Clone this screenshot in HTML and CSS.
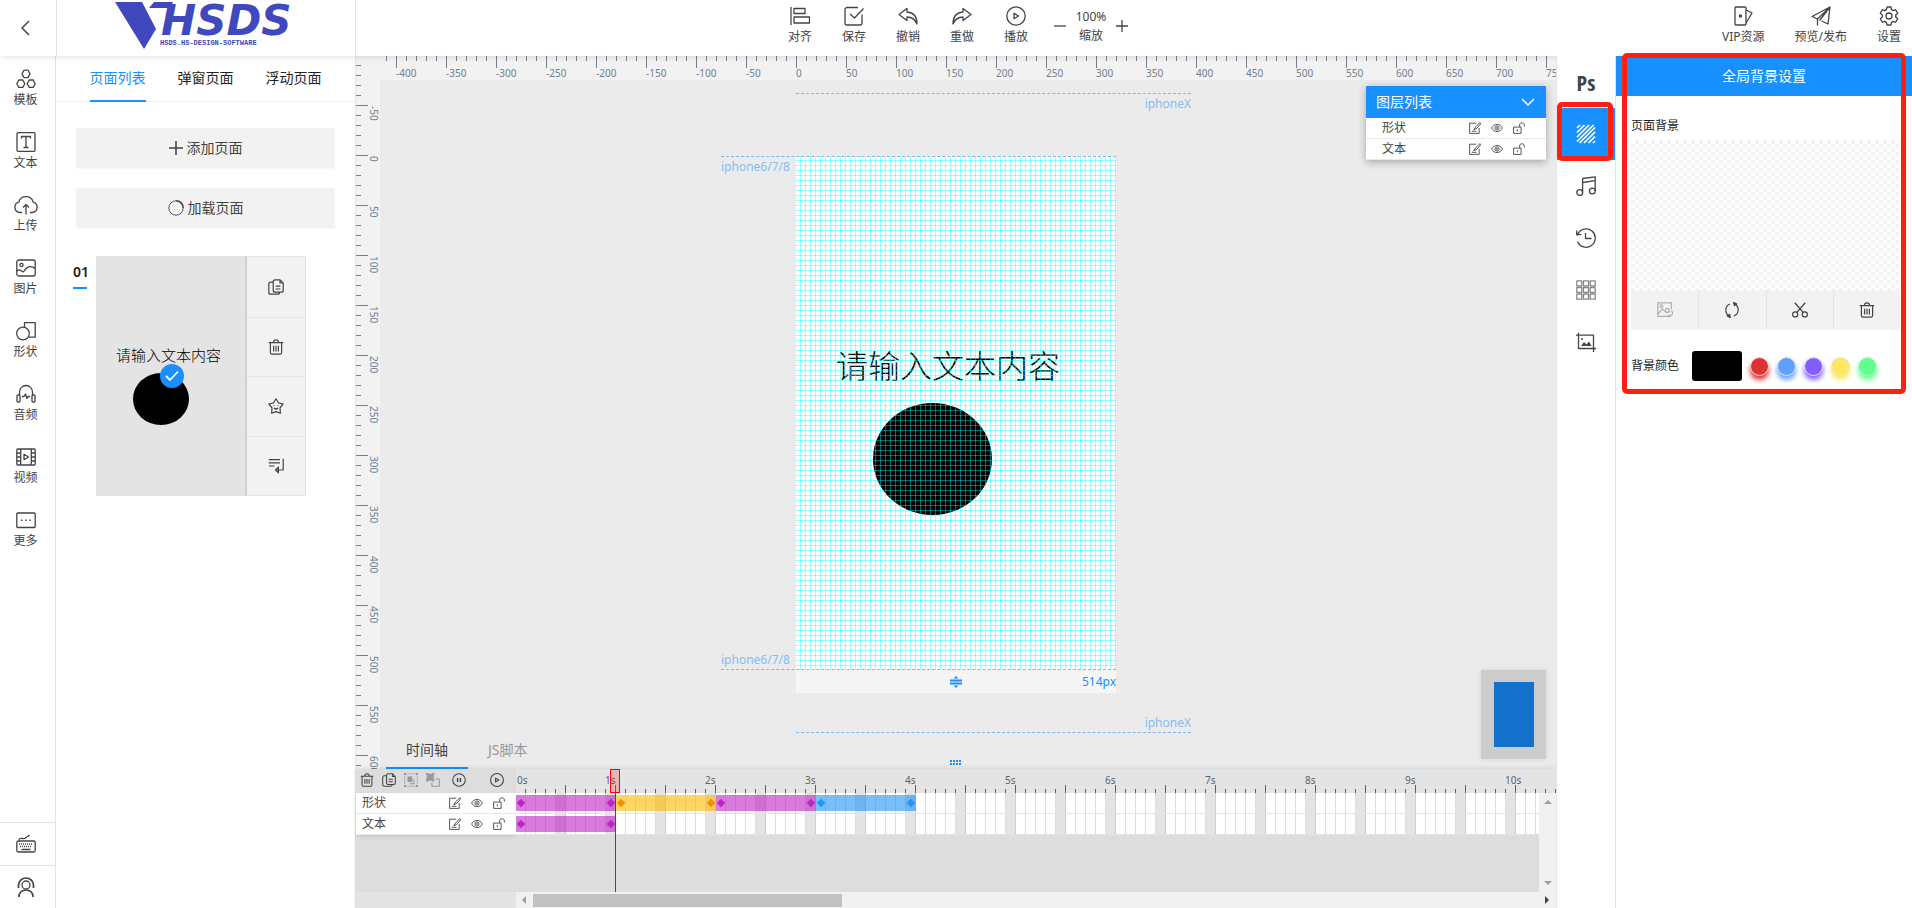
FILE: index.html
```html
<!DOCTYPE html>
<html lang="zh-CN">
<head>
<meta charset="utf-8">
<title>HSDS</title>
<meta name="viewport" content="width=device-width, initial-scale=1">
<link rel="stylesheet" href="styles.css">
</head>
<body>
<svg class="sprite" aria-hidden="true">
  <symbol id="i-back" viewBox="0 0 20 20"><path d="M13 3 6 10l7 7"/></symbol>
  <symbol id="i-tpl" viewBox="0 0 20 20"><path d="M8 1.200h4l2 3.700-2 3.700H8L6 4.900zM2.800 11h4l2 3.700-2 3.700h-4l-2-3.700zM13.200 11h4l2 3.700-2 3.700h-4l-2-3.700z"/></symbol>
  <symbol id="i-text" viewBox="0 0 20 20"><rect x="1" y=".7" width="18" height="18.600" rx="1"/><path d="M5.500 6.500v-2h9v2M10 4.500v11M7.500 15.500h5"/></symbol>
  <symbol id="i-upload" viewBox="0 0 24 20"><path d="M8 17.500H6a5.300 5.300 0 0 1-1.200-10.400 7.500 7.500 0 0 1 14.400 0A5.300 5.300 0 0 1 18 17.500h-2M12 19.500V9.500M9 12.500l3-3 3 3"/></symbol>
  <symbol id="i-image" viewBox="0 0 20 20"><rect x=".8" y="2" width="18.400" height="16" rx="2"/><circle cx="5.500" cy="7" r="1.600"/><path d="M1 13c1.500-1.500 3-1.500 4.500 0s2 1 3-.5c3-4 6.500-5.500 10.500-2"/></symbol>
  <symbol id="i-shape" viewBox="0 0 20 20"><circle cx="7" cy="12.500" r="6.300"/><path d="M8.500 6V1.700h10.700v14.500h-6.500"/></symbol>
  <symbol id="i-audio" viewBox="0 0 20 20"><path d="M3.500 11V8a6.500 6.500 0 0 1 13 0v3"/><rect x="1" y="11" width="3" height="7" rx="1"/><rect x="16" y="11" width="3" height="7" rx="1"/><path d="M6 12.500h2l1.500-2.500 1.500 4.500 1-2h2"/></symbol>
  <symbol id="i-video" viewBox="0 0 20 20"><rect x=".8" y="2" width="18.400" height="16" rx="1"/><path d="M4.700 2v16M15.300 2v16M1 6h3.700M1 10h3.700M1 14h3.700M15.300 6H19M15.300 10H19M15.300 14H19M8 7.300v5.400l4.500-2.700z"/></symbol>
  <symbol id="i-more" viewBox="0 0 20 20"><rect x=".8" y="3" width="18.400" height="14.500" rx="1"/><path d="M5 10.200h1.500M9.300 10.200h1.500M13.500 10.200H15" stroke-width="1.600"/></symbol>
  <symbol id="i-keys" viewBox="0 0 20 20"><rect x=".8" y="7" width="18.400" height="11" rx="1.500"/><path d="M3 7c0-5 5-1 6.500-3S12 3 13.500 1M3 10h1m1 0h1m1 0h1m1 0h1m1 0h1m1 0h1m1 0h1M4 12.500h1m1 0h1m1 0h1m1 0h1m1 0h1m1 0h1M5.500 15.500h9"/></symbol>
  <symbol id="i-agent" viewBox="0 0 20 20"><circle cx="10" cy="8" r="4"/><path d="M2.500 11V8.500a7.500 7.500 0 0 1 15 0V11M2.800 20c.5-5 3.200-7 7.200-7s6.700 2 7.200 7M2.500 7.500v3.500M17.500 7.500v3.500" stroke-width="1.700"/></symbol>
  <symbol id="i-align" viewBox="0 0 20 20"><path d="M1 1v18"/><rect x="4" y="2.500" width="11" height="5"/><rect x="4" y="11" width="15.500" height="6"/></symbol>
  <symbol id="i-save" viewBox="0 0 20 20"><path d="M14 1.500H3a2 2 0 0 0-2 2V17a2 2 0 0 0 2 2h13a2 2 0 0 0 2-2V8.500M6 8l4.500 4L19.500 2.500"/></symbol>
  <symbol id="i-undo" viewBox="0 0 20 20"><path d="M9 2.500 1 8.500l8 6V11c5 0 8 2 10 7 0-7-3.500-11.500-10-12z"/></symbol>
  <symbol id="i-redo" viewBox="0 0 20 20"><path d="m11 2.500 8 6-8 6V11c-5 0-8 2-10 7 0-7 3.500-11.500 10-12z"/></symbol>
  <symbol id="i-play" viewBox="0 0 20 20"><circle cx="10" cy="10" r="9.200"/><path d="M8 7.300v5.400l4.600-2.700z"/></symbol>
  <symbol id="i-pause" viewBox="0 0 20 20"><circle cx="10" cy="10" r="9"/><path d="M8 7v6M12 7v6" stroke-width="2"/></symbol>
  <symbol id="i-minus" viewBox="0 0 12 12"><path d="M0 6h12"/></symbol>
  <symbol id="i-plus" viewBox="0 0 12 12"><path d="M0 6h12M6 0v12"/></symbol>
  <symbol id="i-vip" viewBox="0 0 20 20"><rect x="2" y="1" width="11" height="18" rx="1"/><path d="m13 4 6 3-6 10"/><circle cx="7.500" cy="10" r="1" fill="currentColor"/></symbol>
  <symbol id="i-send" viewBox="0 0 20 20"><path d="M19 1 1 10.500l5.500 2.500L19 1l-2 17-6.500-3M6.500 13v6.500M8.500 14.500 19 1"/></symbol>
  <symbol id="i-gear" viewBox="0 0 20 20"><path d="m8 1-.5 2.600-1.700 1-2.500-.9-2 3.500 2 1.700v2.200l-2 1.700 2 3.500 2.500-.9 1.700 1L8 19h4l.5-2.600 1.700-1 2.500.9 2-3.500-2-1.700V8.900l2-1.700-2-3.500-2.500.9-1.700-1L12 1z"/><circle cx="10" cy="10" r="3"/></symbol>
  <symbol id="i-load" viewBox="0 0 20 20"><path d="M10 1a9 9 0 1 0 9 9" stroke-width="1.100"/><path d="M10 1a9 9 0 0 1 9 9" stroke-width="2"/></symbol>
  <symbol id="i-copy" viewBox="0 0 20 20"><path d="M6.500 3.500c0-1.500.8-2.500 2.500-2.500h6l4 4v9c0 1.700-.8 2.500-2.500 2.500H9c-1.700 0-2.500-.8-2.500-2.500zM15 1v4h4M6.500 4H3.500C1.800 4 1 5 1 6.500v10C1 18.200 2 19 3.500 19H12c1.500 0 2.500-.8 2.500-2.500M9.500 9h6M9.500 12.500h6"/></symbol>
  <symbol id="i-trash" viewBox="0 0 20 20"><path d="M1 4.500h18M6.500 4.500C7 2 8 1 10 1s3 1 3.500 3.500M3 4.500V17c0 1.200.8 2 2 2h10c1.200 0 2-.8 2-2V4.500M7 8.500v7M10 8.500v7M13 8.500v7"/></symbol>
  <symbol id="i-star" viewBox="0 0 20 20"><path d="m10 1 3 5 6 1.500-4 4.700.5 6.800-5.500-2-5.500 2 .5-6.800-4-4.700L7 6z"/><path d="M7 9.500h1M12 9.500h1M7.500 12.500c1.500 1.500 3.500 1.500 5 0"/></symbol>
  <symbol id="i-wrap" viewBox="0 0 20 20"><path d="M1 2h14M1 6h14M1 10h7M19 1v14h-8M13 11.500 9.500 15l3.500 3.500z"/></symbol>
  <symbol id="i-edit" viewBox="0 0 20 20"><path d="M12 2H1v17h16v-9M18.500 1 11 8l-3 5 5-2.500L19.500 3zM4.500 15.500h8"/></symbol>
  <symbol id="i-eye" viewBox="0 0 20 20"><path d="M1 10c4-8 14-8 18 0-4 8-14 8-18 0z"/><circle cx="10" cy="10" r="3.500"/><circle cx="10" cy="10" r=".8"/></symbol>
  <symbol id="i-lock" viewBox="0 0 20 20"><rect x="1" y="8.500" width="12.500" height="10.500"/><path d="M11 8V5c0-5 8-5 8 0v2.500M7.200 12v3.500"/></symbol>
  <symbol id="i-group" viewBox="0 0 20 20"><path d="M1 3.500v13M19 3.500v13M3.500 1h13M3.500 19h13" opacity=".6"/><path d="M0 0h3v3H0zM17 0h3v3h-3zM0 17h3v3H0zM17 17h3v3h-3zM5 5h7v8H5zM13.500 9v5.500H8V16h7V9z" fill="currentColor" stroke="none"/></symbol>
  <symbol id="i-ungroup" viewBox="0 0 20 20"><path d="M0 0h3v1h6V0h3v3h-1v6h1v3H9v-1H3v1H0V9h1V3H0z" fill="currentColor" stroke="none"/><path d="M13.500 8.500H19V19H8.500v-5.500"/></symbol>
  <symbol id="i-chev" viewBox="0 0 14 14"><path d="m1 4 6 6 6-6" stroke-width="1.500"/></symbol>
  <symbol id="i-check" viewBox="0 0 14 14"><path d="m1 7 4 4 8-8.500" stroke-width="1.800"/></symbol>
  <symbol id="i-hatch" viewBox="0 0 20 20"><g stroke-width="1.700"><path d="M1 4 4 1M1 8.500 8.500 1M1 13 13 1M1 17.500 17.500 1M3.500 19 19 3.500M8 19 19 8M12.500 19l6.500-6.500M17 19l2-2"/></g></symbol>
  <symbol id="i-music" viewBox="0 0 20 20"><circle cx="3.700" cy="16.500" r="2.900"/><circle cx="16.300" cy="15" r="2.900"/><path d="M6.600 16.500v-14L19.200.8V15M6.600 6.500 19.200 4.700"/></symbol>
  <symbol id="i-history" viewBox="0 0 20 20"><path d="M1.800 6a9.200 9.200 0 1 1-.3 7.500M.7 2.500v4.300l4.500-.5M9.500 5v5.500h6"/></symbol>
  <symbol id="i-grid" viewBox="0 0 20 20"><path d="M.8.800h5v5h-5zM7.500.800h5v5h-5zM14.200.800h5v5h-5zM.8 7.500h5v5h-5zM7.500 7.500h5v5h-5zM14.200 7.500h5v5h-5zM.8 14.200h5v5h-5zM7.500 14.200h5v5h-5zM14.200 14.200h5v5h-5z"/></symbol>
  <symbol id="i-crop" viewBox="0 0 20 20"><path d="M0 3.200h17.500V20M2.500.5v16H20"/><path d="m5 14 3-4 2.500 2.500 2.500-3 2.500 4.500z" fill="currentColor" stroke="none"/><circle cx="6" cy="7" r="1" fill="currentColor" stroke="none"/></symbol>
  <symbol id="i-swap" viewBox="0 0 20 20"><path d="M17 18H1V1h17v8M1 15l6-6 4 4"/><circle cx="5.500" cy="5.500" r="1.800"/><circle cx="13" cy="10.500" r="2.500"/><path d="M18 11c3 3 1 7-4 7.500M16 15.500l-3 3"/></symbol>
  <symbol id="i-cycle" viewBox="0 0 20 20"><path d="M7.500 2.500C1 5 .5 14 6.500 17.500M12.500 17.500C19 15 19.500 6 13.500 2.500"/><path d="m12 .5 1 4 3-2zM8 19.500l-1-4-3 2z" fill="currentColor"/></symbol>
  <symbol id="i-cut" viewBox="0 0 20 20"><circle cx="4" cy="15.500" r="3.200"/><circle cx="16" cy="15.500" r="3.200"/><path d="M3.500 1 14 13M16.500 1 6 13" stroke-width="1.700"/></symbol>
  <symbol id="i-resize" viewBox="0 0 12 12"><path d="M0 4.500h12M0 7.500h12" stroke-width="2"/><path d="m6 0 2.500 2.500h-5zM6 12l2.500-2.500h-5z" fill="currentColor" stroke="none"/></symbol>
  <symbol id="i-up" viewBox="0 0 8 8"><path d="M0 6h8L4 2z" fill="currentColor" stroke="none"/></symbol>
</svg>

<header class="topbar">
  <button class="back" aria-label="返回"><svg class="ic"><use href="#i-back"/></svg></button>
  <a class="logo" href="#" aria-label="HSDS">
    <svg width="182" height="52" viewBox="0 0 182 52" aria-hidden="true">
      <path class="logo-mark" d="M0 2h27l14 27-12 20zM39 2h19l-3 6H34z"/>
      <text class="logo-name" x="46" y="35">HSDS</text>
      <text class="logo-sub" x="45" y="45">HSDS.HS-DESIGN-SOFTWARE</text>
    </svg>
  </a>
  <nav class="tools">
    <button class="tool"><svg class="ic"><use href="#i-align"/></svg>对齐</button>
    <button class="tool"><svg class="ic"><use href="#i-save"/></svg>保存</button>
    <button class="tool"><svg class="ic"><use href="#i-undo"/></svg>撤销</button>
    <button class="tool"><svg class="ic"><use href="#i-redo"/></svg>重做</button>
    <button class="tool"><svg class="ic"><use href="#i-play"/></svg>播放</button>
    <div class="zoom">
      <button aria-label="缩小"><svg class="ic ic-12"><use href="#i-minus"/></svg></button>
      <div class="zoom-value"><span>100%</span><span>缩放</span></div>
      <button aria-label="放大"><svg class="ic ic-12"><use href="#i-plus"/></svg></button>
    </div>
  </nav>
  <nav class="tools-right">
    <button class="tool-auto"><svg class="ic"><use href="#i-vip"/></svg>VIP资源</button>
    <button class="tool-auto"><svg class="ic"><use href="#i-send"/></svg>预览/发布</button>
    <button class="tool-auto"><svg class="ic"><use href="#i-gear"/></svg>设置</button>
  </nav>
</header>

<main class="app">
  <nav class="side">
    <button class="side-item"><svg class="ic"><use href="#i-tpl"/></svg>模板</button>
    <button class="side-item"><svg class="ic"><use href="#i-text"/></svg>文本</button>
    <button class="side-item"><svg class="ic ic-wide"><use href="#i-upload"/></svg>上传</button>
    <button class="side-item"><svg class="ic"><use href="#i-image"/></svg>图片</button>
    <button class="side-item"><svg class="ic"><use href="#i-shape"/></svg>形状</button>
    <button class="side-item"><svg class="ic"><use href="#i-audio"/></svg>音频</button>
    <button class="side-item"><svg class="ic"><use href="#i-video"/></svg>视频</button>
    <button class="side-item"><svg class="ic"><use href="#i-more"/></svg>更多</button>
    <div class="side-foot">
      <button aria-label="快捷键"><svg class="ic"><use href="#i-keys"/></svg></button>
      <button aria-label="客服"><svg class="ic"><use href="#i-agent"/></svg></button>
    </div>
  </nav>

  <section class="pages">
    <div class="page-tabs" role="tablist">
      <button role="tab" aria-selected="true" class="on">页面列表</button>
      <button role="tab">弹窗页面</button>
      <button role="tab">浮动页面</button>
    </div>
    <div class="page-body">
      <button class="wide-btn"><svg class="ic ic-14"><use href="#i-plus"/></svg>添加页面</button>
      <button class="wide-btn"><svg class="ic ic-16"><use href="#i-load"/></svg>加载页面</button>
    </div>
    <article class="page-card">
      <span class="page-no">01</span>
      <div class="thumb">
        <span class="thumb-text">请输入文本内容</span>
        <span class="thumb-disc"></span>
        <span class="thumb-check"><svg class="ic ic-14"><use href="#i-check"/></svg></span>
      </div>
      <div class="page-acts">
        <button aria-label="复制"><svg class="ic ic-16"><use href="#i-copy"/></svg></button>
        <button aria-label="删除"><svg class="ic ic-16"><use href="#i-trash"/></svg></button>
        <button aria-label="收藏"><svg class="ic ic-16"><use href="#i-star"/></svg></button>
        <button aria-label="移动"><svg class="ic ic-16"><use href="#i-wrap"/></svg></button>
      </div>
    </article>
  </section>

  <section class="work">
    <div class="canvas">
      <div class="rule-x"><div class="rule-x-labels">
        <span>-400</span><span>-350</span><span>-300</span><span>-250</span><span>-200</span><span>-150</span><span>-100</span><span>-50</span><span>0</span><span>50</span><span>100</span><span>150</span><span>200</span><span>250</span><span>300</span><span>350</span><span>400</span><span>450</span><span>500</span><span>550</span><span>600</span><span>650</span><span>700</span><span>750</span>
      </div></div>
      <div class="rule-y"><div class="rule-y-labels">
        <span>-50</span><span>0</span><span>50</span><span>100</span><span>150</span><span>200</span><span>250</span><span>300</span><span>350</span><span>400</span><span>450</span><span>500</span><span>550</span><span>600</span>
      </div></div>
      <div class="board">
        <span class="board-text">请输入文本内容</span>
        <span class="board-disc"></span>
        <div class="board-grid"></div>
        <span class="guide guide-8 guide-8-top">iphone6/7/8</span>
        <span class="guide guide-8 guide-8-bottom">iphone6/7/8</span>
        <span class="guide guide-x guide-x-top">iphoneX</span>
        <span class="guide guide-x guide-x-bottom">iphoneX</span>
        <div class="board-foot"><svg class="ic ic-12"><use href="#i-resize"/></svg><span>514px</span></div>
      </div>
      <aside class="layers">
        <button class="layers-head">图层列表<svg class="ic ic-14"><use href="#i-chev"/></svg></button>
        <div class="layer-row"><span>形状</span><button aria-label="编辑"><svg class="ic"><use href="#i-edit"/></svg></button><button aria-label="显示"><svg class="ic"><use href="#i-eye"/></svg></button><button aria-label="锁定"><svg class="ic"><use href="#i-lock"/></svg></button></div>
        <div class="layer-row"><span>文本</span><button aria-label="编辑"><svg class="ic"><use href="#i-edit"/></svg></button><button aria-label="显示"><svg class="ic"><use href="#i-eye"/></svg></button><button aria-label="锁定"><svg class="ic"><use href="#i-lock"/></svg></button></div>
      </aside>
      <div class="minimap"><div class="minimap-page"></div></div>
      <div class="work-tabs" role="tablist">
        <button role="tab" aria-selected="true" class="on">时间轴</button>
        <button role="tab">JS脚本</button>
      </div>
      <div class="grip"></div>
    </div>

    <div class="timeline">
      <div class="tl-head">
        <div class="tl-tools">
          <button aria-label="删除"><svg class="ic ic-14"><use href="#i-trash"/></svg></button>
          <button aria-label="复制"><svg class="ic ic-14"><use href="#i-copy"/></svg></button>
          <button aria-label="组合" class="dim"><svg class="ic ic-14"><use href="#i-group"/></svg></button>
          <button aria-label="取消组合" class="dim"><svg class="ic ic-14"><use href="#i-ungroup"/></svg></button>
          <button aria-label="暂停" class="gap-l"><svg class="ic ic-14"><use href="#i-pause"/></svg></button>
          <button aria-label="播放" class="push"><svg class="ic ic-14"><use href="#i-play"/></svg></button>
        </div>
        <div class="tl-rule"><span>0s</span><span>1s</span><span>2s</span><span>3s</span><span>4s</span><span>5s</span><span>6s</span><span>7s</span><span>8s</span><span>9s</span><span>10s</span></div>
      </div>
      <div class="tl-body">
        <div class="tl-names">
          <div class="layer-row"><span>形状</span><button aria-label="编辑"><svg class="ic"><use href="#i-edit"/></svg></button><button aria-label="显示"><svg class="ic"><use href="#i-eye"/></svg></button><button aria-label="锁定"><svg class="ic"><use href="#i-lock"/></svg></button></div>
          <div class="layer-row"><span>文本</span><button aria-label="编辑"><svg class="ic"><use href="#i-edit"/></svg></button><button aria-label="显示"><svg class="ic"><use href="#i-eye"/></svg></button><button aria-label="锁定"><svg class="ic"><use href="#i-lock"/></svg></button></div>
        </div>
        <div class="tl-tracks">
          <div class="track"><div class="clip pink"><i></i><i></i></div><div class="clip gold"><i></i><i></i></div><div class="clip pink"><i></i><i></i></div><div class="clip sky"><i></i><i></i></div></div>
          <div class="track"><div class="clip pink"><i></i><i></i></div></div>
        </div>
        <div class="bar-y"><svg class="ic"><use href="#i-up"/></svg><svg class="ic flip"><use href="#i-up"/></svg></div>
      </div>
      <div class="tl-foot">
        <div class="bar-x"><svg class="ic turn-l"><use href="#i-up"/></svg><div class="bar-thumb"></div><svg class="ic turn-r"><use href="#i-up"/></svg></div>
      </div>
      <div class="playhead"></div>
    </div>
  </section>

  <nav class="rail">
    <button class="ps">Ps</button>
    <button class="on marked" aria-label="背景"><svg class="ic"><use href="#i-hatch"/></svg></button>
    <button aria-label="音乐"><svg class="ic"><use href="#i-music"/></svg></button>
    <button aria-label="历史"><svg class="ic"><use href="#i-history"/></svg></button>
    <button aria-label="网格"><svg class="ic soft"><use href="#i-grid"/></svg></button>
    <button aria-label="裁剪"><svg class="ic"><use href="#i-crop"/></svg></button>
  </nav>

  <aside class="props">
    <h2>全局背景设置</h2>
    <div class="props-body">
      <h3>页面背景</h3>
      <div class="checker"></div>
      <div class="bg-tools">
        <button disabled aria-label="更换"><svg class="ic ic-16"><use href="#i-swap"/></svg></button>
        <button aria-label="刷新"><svg class="ic ic-16"><use href="#i-cycle"/></svg></button>
        <button aria-label="裁剪"><svg class="ic ic-16"><use href="#i-cut"/></svg></button>
        <button aria-label="删除"><svg class="ic ic-16"><use href="#i-trash"/></svg></button>
      </div>
      <div class="colors">
        <label for="bg-color">背景颜色</label>
        <input type="color" id="bg-color" value="#000000">
        <button class="dot red" aria-label="红"></button>
        <button class="dot blue" aria-label="蓝"></button>
        <button class="dot violet" aria-label="紫"></button>
        <button class="dot yellow" aria-label="黄"></button>
        <button class="dot green" aria-label="绿"></button>
      </div>
    </div>
    <div class="frame"></div>
  </aside>
</main>
</body>
</html>
```
FILE: styles.css
```css
* { box-sizing: border-box; }

body {
  margin: 0;
  height: 100vh;
  display: flex;
  flex-direction: column;
  overflow: hidden;
  background: #fff;
  color: #444;
  font: 400 12px/16px "Noto Sans", "Noto Sans CJK SC", sans-serif;
}

button {
  margin: 0;
  padding: 0;
  border: 0;
  background: none;
  color: inherit;
  font: inherit;
  display: flex;
  align-items: center;
  justify-content: center;
}

h2, h3 { margin: 0; font-weight: 400; }

.sprite { position: absolute; width: 0; height: 0; }

.ic {
  width: 20px;
  height: 20px;
  flex: none;
  fill: none;
  stroke: currentColor;
  stroke-width: 1.300;
  stroke-linejoin: round;
}
.ic-wide { width: 24px; }
.ic-16 { width: 16px; height: 16px; stroke-width: 1.500; }
.ic-14 { width: 14px; height: 14px; stroke-width: 1.500; }
.ic-12 { width: 12px; height: 12px; }

/* top bar */
.topbar {
  position: relative;
  z-index: 3;
  flex: none;
  height: 56px;
  display: grid;
  grid-template-columns: 57px 299px 1fr 356px;
  background: #fff;
  box-shadow: 0 1px 6px rgba(0, 0, 0, .12);
}
.back { border-right: 1px solid #e4e4e4; padding-right: 4px; }
.back .ic { stroke-width: 1.500; }
.logo {
  display: flex;
  justify-content: center;
  border-right: 1px solid #e4e4e4;
}
.logo svg { overflow: visible; }
.logo-mark { fill: #3f48bd; }
.logo-name { fill: #3f48bd; font: italic bold 42px "DejaVu Sans", sans-serif; }
.logo-sub { fill: #3f48bd; font: bold 7px "Liberation Mono", monospace; }
.tools { display: flex; justify-content: center; }
.tool, .tool-auto {
  flex-direction: column;
  justify-content: flex-start;
  padding-top: 6px;
  gap: 3px;
}
.tool { width: 54px; }
.tools-right {
  display: flex;
  justify-content: flex-end;
  gap: 30px;
  padding-right: 11px;
}
.zoom { display: flex; padding: 0 11px; gap: 12px; height: 52px; }
.zoom-value {
  display: flex;
  flex-direction: column;
  justify-content: center;
  align-items: center;
  gap: 3px;
  width: 26px;
}
.zoom-value span { white-space: nowrap; }

/* page frame */
.app {
  flex: 1;
  min-height: 0;
  display: grid;
  grid-template-columns: 56px 300px 1fr 60px 296px;
}

.side {
  display: flex;
  flex-direction: column;
  border-right: 1px solid #e4e4e4;
}
.side-item {
  flex-direction: column;
  justify-content: flex-start;
  height: 63px;
  padding: 13px 4px 0 0;
  gap: 3px;
}
.side-foot { margin-top: auto; }
.side-foot button {
  width: 100%;
  height: 43px;
  padding-right: 4px;
  border-top: 1px solid #e4e4e4;
}

/* page list */
.pages { border-right: 1px solid #e4e4e4; }
.page-tabs {
  display: flex;
  justify-content: center;
  gap: 32px;
  height: 46px;
  border-bottom: 1px solid #eee;
  color: #222;
  font-size: 14px;
}
.page-tabs button { height: 46px; border-bottom: 2px solid transparent; }
.page-tabs .on { color: #1890ff; border-color: #1890ff; }
.page-body {
  display: flex;
  flex-direction: column;
  gap: 20px;
  padding: 26px 20px 28px;
}
.wide-btn {
  height: 40px;
  gap: 4px;
  background: #f2f2f2;
  border-radius: 2px;
  box-shadow: 0 1px 2px rgba(0, 0, 0, .04);
  font-size: 14px;
}
.wide-btn .ic { stroke-width: 1.300; }
.page-card { display: flex; height: 240px; padding-left: 17px; }
.page-no {
  align-self: flex-start;
  width: 14px;
  margin: 5px 9px 0 0;
  border-bottom: 2px solid #1890ff;
  color: #222;
  font-size: 14px;
  font-weight: 600;
  line-height: 22px;
  padding-bottom: 4px;
}
.thumb {
  position: relative;
  width: 151px;
  background: #e4e4e4;
  border-right: 2px solid #d0d0d0;
}
.thumb-text {
  position: absolute;
  left: 20px;
  top: 88px;
  color: #000;
  font-size: 15px;
  font-weight: 300;
  line-height: 22px;
  white-space: nowrap;
}
.thumb-disc {
  position: absolute;
  left: 37px;
  top: 117px;
  width: 56px;
  height: 52px;
  border-radius: 50%;
  background: #000;
}
.thumb-check {
  position: absolute;
  left: 64px;
  top: 108px;
  width: 24px;
  height: 24px;
  display: flex;
  align-items: center;
  justify-content: center;
  border-radius: 50%;
  background: #1890ff;
  color: #fff;
}
.page-acts {
  display: grid;
  grid-template-rows: repeat(4, 1fr);
  width: 59px;
  background: #f2f2f2;
  border: 1px solid #e4e4e4;
  border-left: 0;
}
.page-acts button + button { border-top: 1px solid #e4e4e4; }

/* workspace */
.work { display: flex; flex-direction: column; min-width: 0; }
.canvas {
  position: relative;
  flex: 1;
  overflow: hidden;
  background: #ebebeb;
  color: #1890ff;
}
.rule-x, .rule-y {
  position: absolute;
  left: 0;
  top: 0;
  overflow: hidden;
  background-color: #f2f2f2;
  color: #708090;
  font-size: 10px;
  line-height: 12px;
}
.rule-x {
  width: 100%;
  height: 24px;
  background-image:
    linear-gradient(90deg, #708090 1px, transparent 1px),
    linear-gradient(90deg, #708090 1px, transparent 1px);
  background-size: 50px 12px, 10px 5px;
  background-position: calc(50% - 135px) 0, calc(50% + 5px) 0;
  background-repeat: repeat-x;
}
.rule-x-labels { display: flex; margin-left: calc(50% - 560px); padding-top: 11px; }
.rule-x-labels span { flex: none; width: 50px; }
.rule-y {
  width: 24px;
  height: 100%;
  background-image:
    linear-gradient(#708090 1px, transparent 1px),
    linear-gradient(#708090 1px, transparent 1px);
  background-size: 12px 50px, 5px 10px;
  background-position: 0 49px, 0 9px;
  background-repeat: repeat-y;
}
.rule-y-labels { padding: 50px 0 0 12px; }
.rule-y-labels span { display: block; height: 50px; writing-mode: vertical-rl; width: 12px; }

.board {
  position: absolute;
  left: calc(50% - 160px);
  top: 100px;
  width: 320px;
  height: 514px;
  background: #fff;
}
.board-text {
  position: absolute;
  left: 40px;
  top: 186px;
  color: #000;
  font-size: 32px;
  font-weight: 300;
  line-height: 48px;
  white-space: nowrap;
}
.board-disc {
  position: absolute;
  left: 77px;
  top: 247px;
  width: 119px;
  height: 112px;
  border-radius: 50%;
  background: #000;
}
.board-grid {
  position: absolute;
  inset: 0;
  background:
    linear-gradient(90deg, transparent 4px, rgba(0, 255, 255, .4) 4px) 0 0 / 5px 5px,
    linear-gradient(transparent 4px, rgba(0, 255, 255, .4) 4px) 0 0 / 5px 5px;
}
.guide { position: absolute; color: #84bdf5; line-height: 20px; }
.guide-8 { left: -75px; width: 395px; }
.guide-x { left: 0; width: 395px; text-align: right; }
.guide-8-top { top: 0; border-top: 1px dashed #7ab8f5; }
.guide-8-bottom { bottom: 0; border-bottom: 1px dashed #7ab8f5; line-height: 18px; }
.guide-x-top { top: -63px; border-top: 1px dashed #7ab8f5; }
.guide-x-bottom { bottom: -63px; border-bottom: 1px dashed #7ab8f5; line-height: 18px; }
.board-foot {
  position: absolute;
  top: 100%;
  width: 100%;
  height: 23px;
  display: grid;
  grid-template-columns: 1fr auto 1fr;
  align-items: center;
  background: #f5f5f5;
}
.board-foot .ic { grid-column: 2; }
.board-foot span { text-align: right; }

.layers {
  position: absolute;
  right: 10px;
  top: 30px;
  width: 180px;
  background: #fff;
  color: #444;
  box-shadow: 0 2px 8px rgba(0, 0, 0, .3);
}
.layers-head {
  width: 100%;
  height: 32px;
  justify-content: space-between;
  padding: 0 11px 0 10px;
  background: #1890ff;
  color: #fff;
  font-size: 14px;
}
.layer-row {
  display: flex;
  align-items: center;
  height: 21px;
  padding-left: 6px;
  border-bottom: 1px solid #e8e8e8;
  background: #fff;
}
.layer-row span { flex: 1; line-height: 18px; }
.layer-row button { width: 22px; height: 20px; }
.layer-row .ic { width: 12px; height: 12px; stroke-width: 1.500; }
.layers .layer-row { padding: 0 16px; }

.minimap {
  position: absolute;
  right: 10px;
  bottom: 10px;
  width: 65px;
  height: 89px;
  padding: 12px 13px;
  background: #ccc;
  box-shadow: 0 0 6px rgba(0, 0, 0, .1);
}
.minimap-page { width: 40px; height: 65px; background: #1472cc; }

.work-tabs {
  position: absolute;
  left: 30px;
  bottom: 0;
  display: flex;
  font-size: 14px;
  color: #999;
}
.work-tabs button { height: 36px; padding: 0 20px; border-bottom: 2px solid transparent; }
.work-tabs .on { color: #444; border-color: #1890ff; }
.grip {
  position: absolute;
  left: calc(50% - 6px);
  bottom: 3px;
  width: 12px;
  height: 6px;
  background: linear-gradient(#1890ff 2px, transparent 2px) 0 0 / 12px 3px;
  -webkit-mask: linear-gradient(90deg, #000 2px, transparent 2px) 0 0 / 3px 6px;
  mask: linear-gradient(90deg, #000 2px, transparent 2px) 0 0 / 3px 6px;
}

/* timeline */
.timeline {
  position: relative;
  flex: none;
  height: 139px;
  display: flex;
  flex-direction: column;
  background: #ddd;
  box-shadow: 0 -1px 4px rgba(0, 0, 0, .1);
}
.tl-head { display: flex; height: 24px; }
.tl-tools { display: flex; width: 160px; padding: 0 8px 0 0; }
.tl-tools button { width: 22px; height: 22px; }
.tl-tools .dim { color: #999; }
.tl-tools .gap-l { margin-left: 4px; }
.tl-tools .push { margin-left: auto; }
.tl-rule {
  flex: 1;
  display: flex;
  overflow: hidden;
  background:
    linear-gradient(90deg, transparent 49px, #56656f 49px) 0 100% / 50px 8px repeat-x,
    linear-gradient(90deg, transparent 9px, #56656f 9px) 0 100% / 10px 4px repeat-x,
    #e4e4e4;
  color: #56656f;
  font-size: 10px;
  line-height: 22px;
}
.tl-rule span { flex: none; width: 100px; }
.tl-rule span:first-child { width: 89px; padding-left: 1px; }
.tl-body { flex: 1; display: flex; min-height: 0; }
.tl-names { width: 160px; }
.tl-names .layer-row { padding-right: 6px; box-shadow: 0 2px 3px rgba(0, 0, 0, .08); }
.tl-tracks { flex: 1; overflow: hidden; }
.track {
  display: flex;
  align-items: center;
  height: 21px;
  border-bottom: 1px solid #e4e4e4;
  background:
    linear-gradient(90deg, transparent 49px, #ccc 49px) 0 0 / 50px 20px repeat-x,
    linear-gradient(90deg, transparent 40px, #e4e4e4 40px) 0 0 / 50px 20px repeat-x,
    linear-gradient(90deg, #fff 9px, #ddd 9px) 0 0 / 10px 20px repeat-x;
}
.clip {
  display: flex;
  align-items: center;
  justify-content: space-between;
  width: 100px;
  height: 16px;
  padding: 0 2px;
}
.clip i { width: 6px; height: 6px; transform: rotate(45deg); }
.pink { background: rgba(190, 35, 197, .6); }
.pink i { background: #be23c5; }
.gold { background: rgba(255, 185, 0, .6); }
.gold i { background: #f09000; }
.sky { background: rgba(28, 147, 248, .6); }
.sky i { background: #2196f3; }
.bar-y {
  display: flex;
  flex-direction: column;
  justify-content: space-between;
  align-items: center;
  width: 17px;
  padding: 5px 0;
  background: #f1f1f1;
  color: #a0a0a0;
}
.bar-y .ic, .bar-x .ic { width: 8px; height: 8px; }
.flip { transform: rotate(180deg); }
.turn-l { transform: rotate(-90deg); color: #a0a0a0; }
.turn-r { transform: rotate(90deg); color: #444; margin-left: auto; }
.tl-foot { height: 16px; padding-left: 160px; background: #e4e4e4; }
.bar-x {
  display: flex;
  align-items: center;
  gap: 5px;
  height: 16px;
  padding: 0 5px 0 4px;
  background: #f1f1f1;
}
.bar-thumb { width: 30%; height: 13px; background: #c1c1c1; }
.playhead {
  position: absolute;
  left: 254px;
  top: 0;
  width: 10px;
  height: 24px;
  border: 1px solid #f00;
  background: rgba(255, 0, 0, .2);
}
.playhead::after {
  content: "";
  position: absolute;
  left: 4px;
  top: 100%;
  width: 1px;
  height: 100px;
  background: #f00;
}

/* tool rail */
.rail {
  position: relative;
  z-index: 4;
  border: solid #e4e4e4;
  border-width: 0 1px;
  background: #fff;
}
.rail button { width: 100%; height: 52px; }
.rail .ps { font: bold 22px/24px "Liberation Sans Narrow", "Open Sans Condensed", "Liberation Sans", sans-serif; }
.rail .on { background: #1890ff; color: #fff; }
.rail .soft { color: #888; }
.marked { position: relative; }
.marked::after {
  content: "";
  position: absolute;
  left: 0;
  right: 2px;
  top: -6px;
  bottom: -1px;
  border: 5px solid #ff1e10;
  border-radius: 5px;
}

/* properties */
.props { position: relative; z-index: 4; }
.props h2 {
  height: 40px;
  background: #1890ff;
  color: #fff;
  font-size: 14px;
  line-height: 40px;
  text-align: center;
}
.props-body { padding: 21px 12px 0 15px; color: #222; }
.props h3 { font-size: 12px; line-height: 18px; }
.checker {
  height: 150px;
  margin-top: 5px;
  background: repeating-conic-gradient(#f3f3f3 0 25%, #fff 0 50%) 0 0 / 8px 8px;
}
.bg-tools {
  display: grid;
  grid-template-columns: repeat(4, 1fr);
  background: #f2f2f2;
}
.bg-tools button { height: 40px; color: #444; }
.bg-tools button + button { border-left: 1px solid #e4e4e4; }
.bg-tools button:disabled { color: #b0b0b0; }
.colors { display: flex; align-items: center; gap: 8px; padding-top: 21px; }
.colors input {
  width: 50px;
  height: 30px;
  margin: 0 0 0 5px;
  padding: 0;
  border: 0;
  border-radius: 3px;
  background: none;
  overflow: hidden;
}
.colors input::-webkit-color-swatch-wrapper { padding: 0; }
.colors input::-webkit-color-swatch { border: 0; }
.dot { width: 19px; height: 19px; border: 1px solid #e4e4e4; border-radius: 50%; }
.red { background: #dd3333; box-shadow: 0 4px 5px #dd3333; }
.blue { background: #5ea0ff; box-shadow: 0 4px 5px #5ea0ff; }
.violet { background: #835eff; box-shadow: 0 4px 5px #835eff; }
.yellow { background: #ffe85c; box-shadow: 0 4px 5px #ffe85c; }
.green { background: #5eff8f; box-shadow: 0 4px 5px #5eff8f; }
.frame {
  position: absolute;
  left: 6px;
  right: 6px;
  top: -3px;
  height: 341px;
  border: 5px solid #ff1e10;
  border-radius: 5px;
  pointer-events: none;
}
```
